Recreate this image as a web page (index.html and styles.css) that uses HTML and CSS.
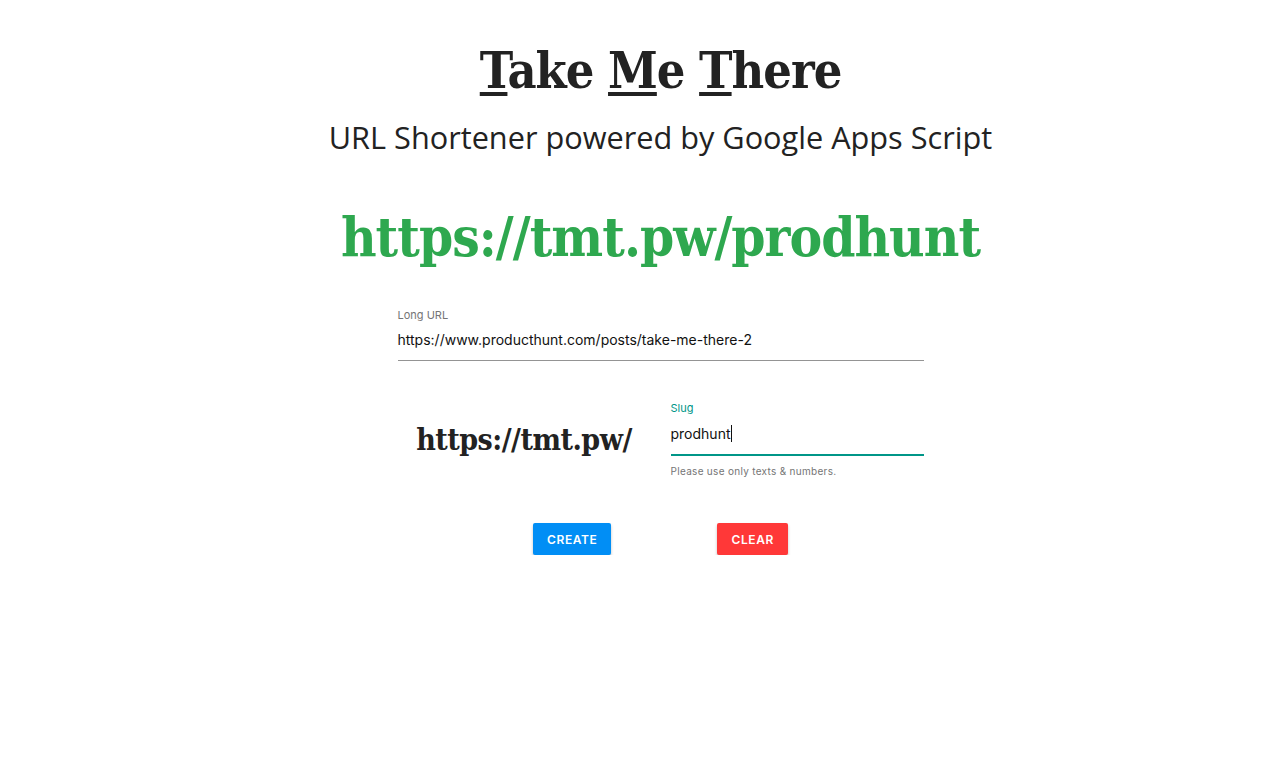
FILE: index.html
```html
<!DOCTYPE html>
<html lang="en">
<head>
<meta charset="utf-8">
<title>Take Me There</title>
<link rel="stylesheet" href="styles.css">
</head>
<body>
<main class="page">
  <h1 class="title"><u>T</u>ake <u>M</u>e <u>T</u>here</h1>
  <p class="subtitle">URL Shortener powered by Google Apps Script</p>
  <p class="short-url">https://tmt.pw/prodhunt</p>
  <form class="form">
    <div class="field">
      <label class="field-label">Long URL</label>
      <div class="field-input">https://www.producthunt.com/posts/take-me-there-2</div>
    </div>
    <div class="slug-row">
      <div class="prefix">https://tmt.pw/</div>
      <div class="field field-focused">
        <label class="field-label">Slug</label>
        <div class="field-input">prodhunt<span class="caret"></span></div>
        <div class="field-hint">Please use only texts &amp; numbers.</div>
      </div>
    </div>
    <div class="actions">
      <button type="button" class="btn btn-create">CREATE</button>
      <button type="button" class="btn btn-clear">CLEAR</button>
    </div>
  </form>
</main>
</body>
</html>
```
FILE: styles.css
```css
html, body {
  margin: 0;
  padding: 0;
  background: #fff;
}
body {
  padding-left: 50px;
}
.page {
  display: flex;
  flex-direction: column;
  align-items: center;
  padding-top: 36px;
}
.title {
  margin: 0;
  font-family: "DejaVu Serif Condensed", "DejaVu Serif", serif;
  font-stretch: condensed;
  font-weight: bold;
  font-size: 50px;
  line-height: 70px;
  color: #222;
  letter-spacing: -1px;
}
.title u {
  text-decoration-thickness: 4px;
  text-underline-offset: 4px;
}
.subtitle {
  margin: 10px 0 0;
  font-family: "Open Sans", sans-serif;
  font-size: 30.7px;
  line-height: 42px;
  color: #222;
}
.short-url {
  margin: 44px 0 0;
  font-family: "DejaVu Serif Condensed", "DejaVu Serif", serif;
  font-stretch: condensed;
  font-weight: bold;
  font-size: 54.5px;
  line-height: 70px;
  color: #2ea84f;
  letter-spacing: -1px;
}
.form {
  width: 526px;
  margin-top: 36px;
  font-family: Inter, Roboto, sans-serif;
}
.field {
  display: flex;
  flex-direction: column;
}
.field-label {
  font-size: 11px;
  line-height: 14px;
  color: #757575;
}
.field-input {
  font-size: 14px;
  line-height: 20px;
  color: #111;
  padding: 8px 0 10px;
  border-bottom: 1px solid #949494;
}
.field-focused .field-label {
  color: #009688;
}
.field-focused .field-input {
  border-bottom: 2px solid #009688;
  padding-top: 9px;
  padding-bottom: 10px;
}
.caret {
  display: inline-block;
  width: 1px;
  height: 17px;
  background: #111;
  vertical-align: -3px;
}
.field-hint {
  margin-top: 8px;
  font-size: 10px;
  line-height: 14px;
  color: #757575;
  letter-spacing: 0.3px;
}
.slug-row {
  display: grid;
  grid-template-columns: 1fr 1fr;
  column-gap: 20px;
  margin-top: 40px;
}
.prefix {
  display: flex;
  align-items: center;
  justify-content: center;
  font-family: "DejaVu Serif Condensed", "DejaVu Serif", serif;
  font-stretch: condensed;
  font-weight: bold;
  font-size: 30px;
  color: #222;
  letter-spacing: -0.5px;
}
.actions {
  display: flex;
  justify-content: center;
  gap: 106px;
  margin-top: 45px;
}
.btn {
  height: 32px;
  padding: 0 14px;
  border: none;
  border-radius: 2px;
  font-family: Inter, Roboto, sans-serif;
  font-size: 12px;
  font-weight: 600;
  letter-spacing: 0.6px;
  color: #fff;
  box-shadow: 0 2px 3px rgba(0,0,0,0.25);
}
.btn-create {
  background: #018ef5;
}
.btn-clear {
  background: #ff3838;
}
```
